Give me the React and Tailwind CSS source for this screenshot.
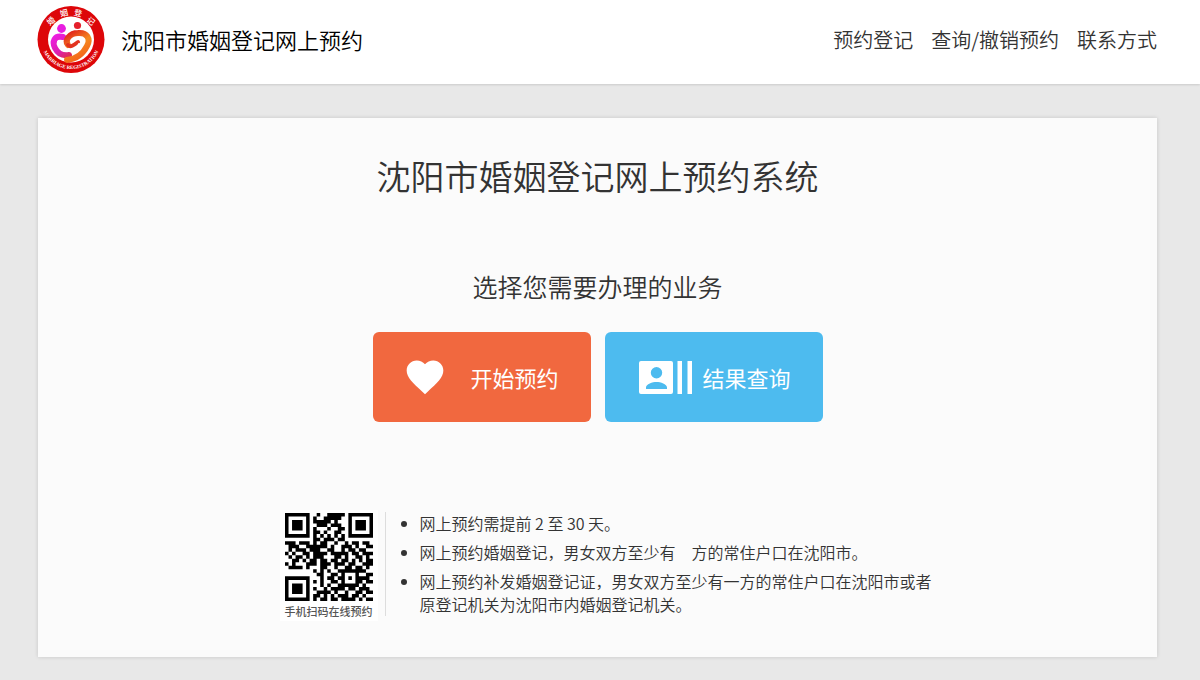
import React from "react";

const QR_ROWS = [
  "1111111001001111101111111",
  "1000001010011111001000001",
  "1011101011111010001011101",
  "1011101001110111001011101",
  "1011101010001001101011101",
  "1000001011010011001000001",
  "1111111010101010101111111",
  "0000000011011101100000000",
  "1110111010110010010110110",
  "0111001111110100111010011",
  "0101110111001100101101100",
  "1010011011110111110110111",
  "0101101011100011010011010",
  "0011010110110110110101011",
  "1010001110111011101100111",
  "0111101000110010011011010",
  "0000000010101001111111100",
  "0000000001100110100010011",
  "1111111000101101101011110",
  "1000001010100110100011011",
  "1011101000101001111110100",
  "1011101010010111101101110",
  "1011101001111010010011011",
  "1000001011010101110110100",
  "1111111010110110111101011",
];

const QR_PATH = QR_ROWS.map((row, y) =>
  row
    .split("")
    .map((cell, x) => (cell === "1" ? `M${x} ${y}h1v1h-1z` : ""))
    .join("")
).join("");

const NAV = ["预约登记", "查询/撤销预约", "联系方式"];

const NOTES = [
  "网上预约需提前 2 至 30 天。",
  "网上预约婚姻登记，男女双方至少有　方的常住户口在沈阳市。",
  "网上预约补发婚姻登记证，男女双方至少有一方的常住户口在沈阳市或者原登记机关为沈阳市内婚姻登记机关。",
];

function Logo() {
  return (
    <svg viewBox="0 0 68 68" className="size-[68px] shrink-0" role="img" aria-label="婚姻登记">
      <defs>
        <linearGradient id="lobe" gradientUnits="userSpaceOnUse" x1="34" y1="26" x2="48" y2="50">
          <stop offset="0" stopColor="#e2281c" />
          <stop offset="0.5" stopColor="#f58a1f" />
          <stop offset="1" stopColor="#f4661c" />
        </linearGradient>
        <linearGradient id="arm" gradientUnits="userSpaceOnUse" x1="17" y1="28" x2="34" y2="52">
          <stop offset="0" stopColor="#ee1ee6" />
          <stop offset="0.6" stopColor="#dc1fae" />
          <stop offset="1" stopColor="#e0303c" />
        </linearGradient>
        <path id="ring" d="M5 42A30.500 30.500 0 0 0 63 42" />
      </defs>
      <circle cx="34" cy="33.5" r="33.5" fill="#dd0609" />
      <circle cx="34" cy="33.5" r="23" fill="#fff" />
      <g
        fill="#fff"
        fontSize="8"
        fontWeight="500"
        textAnchor="middle"
        fontFamily="Noto Sans CJK SC, sans-serif"
      >
        <text x="14" y="18" transform="rotate(-40 14 15)">婚</text>
        <text x="27" y="10" transform="rotate(-13 27 7)">姻</text>
        <text x="41" y="10" transform="rotate(13 41 7)">登</text>
        <text x="54" y="18" transform="rotate(40 54 15)">记</text>
      </g>
      <text
        fill="#fff"
        fontSize="5"
        fontWeight="700"
        fontFamily="Liberation Serif, serif"
        textAnchor="middle"
      >
        <textPath href="#ring" startOffset="50%">MARRIAGE REGISTRATION</textPath>
      </text>
      <circle cx="24.5" cy="22.5" r="4.4" fill="#e81ee0" />
      <circle cx="40.5" cy="19.5" r="3.6" fill="#e5202b" />
      <g fill="none" strokeLinecap="round">
        <path d="M26 31C17 29 15 36 18 42C21 48 26 50 32 49" stroke="url(#arm)" strokeWidth="6" />
        <path
          d="M31 39C27 34 33 27 41 27C50 26 54 33 50 40C46 48 39 53 30 54"
          stroke="url(#lobe)"
          strokeWidth="6"
        />
        <path d="M31 39C33 42 37 39 41 36" stroke="#e2331f" strokeWidth="4" />
        <path d="M42 38C41 43 37 45 32 45" stroke="#fff" strokeWidth="2" />
      </g>
    </svg>
  );
}

export default function App() {
  return (
    <div className="flex min-h-screen flex-col bg-[#e8e8e8] font-['Noto_Sans_CJK_SC',sans-serif] font-[350] text-[#333]">
      <header className="flex h-[84px] items-center justify-between bg-white pr-[43px] pb-1 pl-[37px] shadow-[0_1px_2px_rgba(0,0,0,0.12)]">
        <a href="#home" className="flex items-center gap-4 text-[22px] text-black">
          <Logo />
          <span className="pb-[2px]">沈阳市婚姻登记网上预约</span>
        </a>
        <nav className="flex gap-[18px] text-[20px]">
          {NAV.map((label) => (
            <a key={label} href="#nav">
              {label}
            </a>
          ))}
        </nav>
      </header>

      <main className="mt-[34px] mr-[43px] mb-[23px] ml-[38px] flex grow flex-col items-center bg-[#fbfbfb] shadow-[0_0_4px_rgba(0,0,0,0.15)]">
        <h1 className="mt-[34px] text-[34px] leading-12">沈阳市婚姻登记网上预约系统</h1>
        <h2 className="mt-[68px] text-[25px] leading-9">选择您需要办理的业务</h2>
        <div className="mt-[28px] flex gap-[14px] text-[22px] font-normal text-white">
          <button
            type="button"
            className="flex h-[90px] w-[218px] items-center justify-between rounded-md bg-[#f1683f] pr-[32px] pl-[30px]"
          >
            <svg viewBox="0 0 24 24" className="size-11" fill="currentColor" aria-hidden="true">
              <path d="M12 21.35l-1.45-1.32C5.4 15.36 2 12.28 2 8.5 2 5.42 4.42 3 7.5 3c1.74 0 3.41.81 4.5 2.09C13.09 3.81 14.76 3 16.5 3 19.58 3 22 5.42 22 8.5c0 3.78-3.4 6.86-8.55 11.54L12 21.35z" />
            </svg>
            <span>开始预约</span>
          </button>
          <button
            type="button"
            className="flex h-[90px] w-[218px] items-center justify-between rounded-md bg-[#4dbbef] pr-[32px] pl-[34px]"
          >
            <svg viewBox="0 0 53 33" className="h-[33px] w-[53px]" fill="currentColor" aria-hidden="true">
              <path
                fillRule="evenodd"
                d="M2 0H32a2 2 0 0 1 2 2V31a2 2 0 0 1-2 2H2a2 2 0 0 1-2-2V2a2 2 0 0 1 2-2ZM17.5 6a5.7 5.7 0 1 0 0 11.4a5.7 5.7 0 0 0 0-11.4ZM7 28H28V26.5C28 23 21.500 21 17.500 21S7 23 7 26.500Z"
              />
              <path d="M38.500 0H43V33H38.500ZM48.500 0H53V33H48.500Z" />
            </svg>
            <span>结果查询</span>
          </button>
        </div>

        <section className="mt-[88px] mb-9 flex w-full max-w-[672px] items-start pl-[18px]">
          <figure className="flex shrink-0 flex-col items-center bg-white px-[5px] pt-[3px]">
            <svg viewBox="0 0 25 25" className="size-[88px]" role="img" aria-label="二维码">
              <path d={QR_PATH} fill="#000" />
            </svg>
            <figcaption className="text-[11px] leading-5 font-medium text-[#555]">手机扫码在线预约</figcaption>
          </figure>
          <ul className="mt-[2px] ml-[7px] flex list-disc flex-col gap-[6px] border-l border-[#ddd] pl-[34px] text-[16px] leading-[23px]">
            {NOTES.map((note) => (
              <li key={note}>{note}</li>
            ))}
          </ul>
        </section>
      </main>
    </div>
  );
}
